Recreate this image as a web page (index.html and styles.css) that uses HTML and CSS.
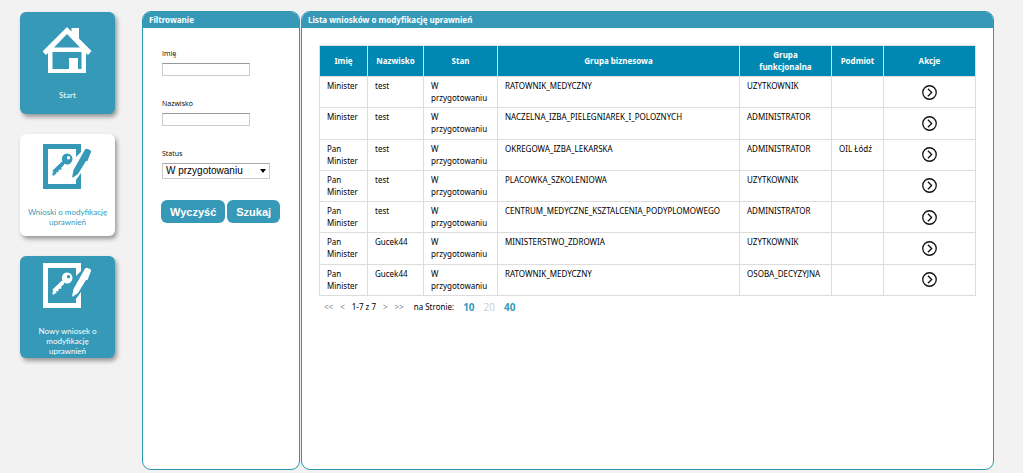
FILE: index.html
```html
<!DOCTYPE html>
<html lang="pl">
<head>
<meta charset="utf-8">
<title>Lista wniosków o modyfikację uprawnień</title>
<link rel="stylesheet" href="styles.css">
</head>
<body>
<svg class="defs" aria-hidden="true">
  <symbol id="request" viewBox="1 0 50 48">
    <path fill="currentColor" d="M1 1H39V9L34 14V6H6V41H34V37L39 30V46H1Z"/>
    <path fill="currentColor" fill-rule="evenodd" d="M25 10.500a5.500 5.500 0 1 1 0 11q-1.500 0-2.700-.7L13 30.500l-.5 2-2 0 0-2.500 2-1.500-1-1 9-9A5.500 5.500 0 0 1 25 10.500ZM26.500 13a1.700 1.700 0 1 0 .1 0Z"/>
    <path fill="none" stroke="currentColor" stroke-width="2" d="M20.500 19.500 11 28.500M21.500 21 15.500 27M17 24l2 2.500M14 27l2 2M12 28.500l2 2.500"/>
    <path fill="currentColor" d="M43 6.500q1-1 2.500-.5l2.500 1q1.500.8 1 2L45.500 18 44 18 36 31l-5 3.500q-1 .3-.8-.8L31.500 27Z"/>
  </symbol>
  <symbol id="go" viewBox="0 0 16 16">
    <circle cx="8" cy="8" r="7.200" fill="none" stroke="currentColor" stroke-width="1.400"/>
    <path fill="none" stroke="currentColor" stroke-width="1.400" d="M6.300 4 10.300 8 6.300 12"/>
  </symbol>
</svg>
<div class="page">
  <nav class="menu">
    <a class="tile" href="#">
      <svg class="tile-icon" viewBox="1 0 50 48" aria-hidden="true">
        <path fill="currentColor" d="M25 1 29.500 5.500V2H37V12.500L49.500 25 46 29 44 27V47H6V27L4 29 .5 25.500ZM25 8 12 21.500H38ZM10.500 26V43H27V32H36V43H39.500V26Z" fill-rule="evenodd"/>
      </svg>
      <span class="tile-label">Start</span>
    </a>
    <a class="tile tile-active" href="#">
      <svg class="tile-icon"><use href="#request"/></svg>
      <span class="tile-label">Wnioski o modyfikację uprawnień</span>
    </a>
    <a class="tile tile-high" href="#">
      <svg class="tile-icon"><use href="#request"/></svg>
      <span class="tile-label">Nowy wniosek o modyfikację uprawnień</span>
    </a>
  </nav>
  <section class="panel panel-filter">
    <h2 class="panel-title">Filtrowanie</h2>
    <form class="filter">
      <div class="field"><label for="imie">Imię</label><input id="imie" type="text"></div>
      <div class="field"><label for="nazwisko">Nazwisko</label><input id="nazwisko" type="text"></div>
      <div class="field"><label for="status">Status</label>
        <span class="select-box"><select id="status"><option>W przygotowaniu</option></select></span></div>
      <div class="buttons"><button type="reset">Wyczyść</button><button type="button">Szukaj</button></div>
    </form>
  </section>
  <section class="panel panel-list">
    <h2 class="panel-title">Lista wniosków o modyfikację uprawnień</h2>
    <div class="list">
      <table>
        <colgroup><col class="c-name"><col class="c-surname"><col class="c-state"><col class="c-business"><col class="c-function"><col class="c-entity"><col></colgroup>
        <thead><tr><th>Imię</th><th>Nazwisko</th><th>Stan</th><th>Grupa biznesowa</th><th>Grupa funkcjonalna</th><th>Podmiot</th><th>Akcje</th></tr></thead>
        <tbody>
          <tr><td>Minister</td><td>test</td><td>W przygotowaniu</td><td>RATOWNIK_MEDYCZNY</td><td>UZYTKOWNIK</td><td></td><td class="action"><a href="#" aria-label="Otwórz"><svg><use href="#go"/></svg></a></td></tr>
          <tr><td>Minister</td><td>test</td><td>W przygotowaniu</td><td>NACZELNA_IZBA_PIELEGNIAREK_I_POLOZNYCH</td><td>ADMINISTRATOR</td><td></td><td class="action"><a href="#" aria-label="Otwórz"><svg><use href="#go"/></svg></a></td></tr>
          <tr><td>Pan Minister</td><td>test</td><td>W przygotowaniu</td><td>OKREGOWA_IZBA_LEKARSKA</td><td>ADMINISTRATOR</td><td>OIL Łódź</td><td class="action"><a href="#" aria-label="Otwórz"><svg><use href="#go"/></svg></a></td></tr>
          <tr><td>Pan Minister</td><td>test</td><td>W przygotowaniu</td><td>PLACOWKA_SZKOLENIOWA</td><td>UZYTKOWNIK</td><td></td><td class="action"><a href="#" aria-label="Otwórz"><svg><use href="#go"/></svg></a></td></tr>
          <tr><td>Pan Minister</td><td>test</td><td>W przygotowaniu</td><td>CENTRUM_MEDYCZNE_KSZTALCENIA_PODYPLOMOWEGO</td><td>ADMINISTRATOR</td><td></td><td class="action"><a href="#" aria-label="Otwórz"><svg><use href="#go"/></svg></a></td></tr>
          <tr><td>Pan Minister</td><td>Gucek44</td><td>W przygotowaniu</td><td>MINISTERSTWO_ZDROWIA</td><td>UZYTKOWNIK</td><td></td><td class="action"><a href="#" aria-label="Otwórz"><svg><use href="#go"/></svg></a></td></tr>
          <tr><td>Pan Minister</td><td>Gucek44</td><td>W przygotowaniu</td><td>RATOWNIK_MEDYCZNY</td><td>OSOBA_DECYZYJNA</td><td></td><td class="action"><a href="#" aria-label="Otwórz"><svg><use href="#go"/></svg></a></td></tr>
        </tbody>
      </table>
      <div class="pager">
        <div class="pages"><span class="arrow">&lt;&lt;</span><span class="arrow">&lt;</span><span>1-7 z 7</span><span class="arrow">&gt;</span><span class="arrow">&gt;&gt;</span></div>
        <div class="sizes"><span>na Stronie:</span><a class="size" href="#">10</a><span class="size size-current">20</span><a class="size" href="#">40</a></div>
      </div>
    </div>
  </section>
</div>
</body>
</html>
```
FILE: styles.css
```css
* { box-sizing: border-box; }
body {
  margin: 0;
  background: #f2f2f2;
  color: #000;
  font: 8px/12px "Noto Sans", "Open Sans", sans-serif;
}
.defs { position: absolute; width: 0; height: 0; }
.page {
  display: flex;
  min-height: 100vh;
  padding: 11px 29px 3px 20px;
}
.menu {
  display: flex;
  flex-direction: column;
  gap: 20px;
  flex: 0 0 95px;
  margin-right: 27px;
  padding-top: 1px;
}
.tile {
  display: flex;
  flex-direction: column;
  align-items: center;
  height: 102px;
  padding: 14px 7px 0;
  border-radius: 6px;
  background: #3699b8;
  box-shadow: 2px 3px 4px #999;
  color: #fff;
  font: 8px/10px Lato, sans-serif;
  text-align: center;
  text-decoration: none;
}
.tile-active { padding-top: 9px; background: #fff; color: #3699b8; }
.tile-high { padding-top: 6px; }
.tile-icon { width: 50px; height: 48px; flex: none; }
.tile-label { margin-top: 16px; }
.panel {
  border: 1px solid #2b97b0;
  border-radius: 9px;
  background: #fff;
  overflow: hidden;
}
.panel-filter { flex: 0 0 158px; margin-right: 1px; }
.panel-list { flex: 1; min-width: 0; }
.panel-title {
  margin: 0;
  padding: 0 6px;
  background: #3699b8;
  color: #fff;
  font-size: 8px;
  line-height: 16px;
}
.filter { padding: 20px 17px 0 19px; }
.field {
  display: flex;
  flex-direction: column;
  align-items: flex-start;
  height: 50px;
  gap: 3px;
}
.field label { font: 7px/12px "Open Sans", sans-serif; }
.field input {
  width: 88px;
  height: 13px;
  padding: 0 3px;
  border: 1px solid #ccc;
  border-top-color: #999;
  font: 9px "Open Sans", sans-serif;
}
.select-box { position: relative; }
.select-box::after {
  content: "";
  position: absolute;
  right: 4px;
  top: 6px;
  border: 3px solid transparent;
  border-top: 4px solid #000;
  border-bottom: 0;
  pointer-events: none;
}
.field select {
  display: block;
  width: 108px;
  height: 16px;
  padding: 0 3px;
  appearance: none;
  border: 1px solid #ccc;
  border-top-color: #aaa;
  border-radius: 0;
  background: #fff;
  color: #000;
  font: 10px/14px "Liberation Sans", sans-serif;
}
.buttons { display: flex; gap: 2px; margin: 2px 0 0 -1px; }
.buttons button {
  height: 23px;
  padding: 0 9px;
  border: 0;
  border-radius: 6px;
  background: #3699b8;
  color: #fff;
  font: bold 11px "Liberation Sans", sans-serif;
}
.list { padding: 17px 17px 0; }
table {
  width: 100%;
  height: 251px;
  table-layout: fixed;
  border-collapse: collapse;
}
.c-name { width: 48px; }
.c-surname { width: 56px; }
.c-state { width: 74px; }
.c-business { width: 242px; }
.c-function { width: 92px; }
.c-entity { width: 52px; }
th, td { border: 1px solid #ddd; padding: 3px 7px; }
th { background: #0087b2; color: #fff; }
td { vertical-align: top; text-align: left; }
td.action { padding: 0; vertical-align: middle; text-align: center; }
.action a { display: block; height: 15px; color: #111; }
.action svg { display: block; width: 15px; height: 15px; margin: 0 auto; }
.pager { display: flex; gap: 10px; padding: 5px 5px 0; }
.pages { display: flex; align-items: center; gap: 7px; }
.sizes { display: flex; align-items: center; gap: 9px; }
.arrow { color: #888; }
.size { color: #3699b8; font: bold 10px/12px "Open Sans", sans-serif; text-decoration: none; }
.size-current { color: #ccc; font-weight: normal; }
```
